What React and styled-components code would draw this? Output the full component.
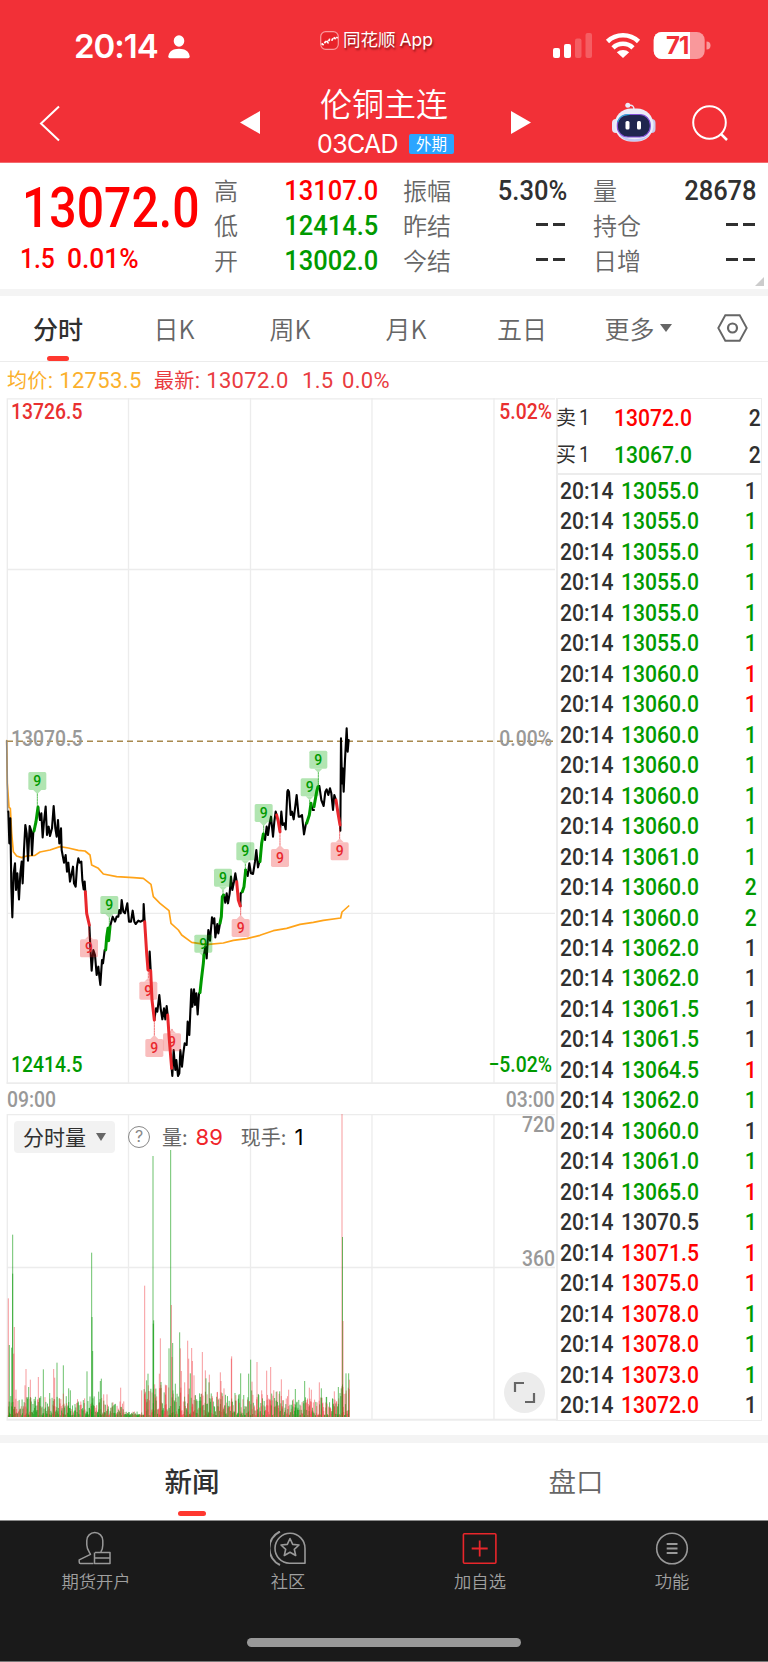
import React from "react";
import styled, { createGlobalStyle, css } from "styled-components";

const RED = "#ff0000";
const GREEN = "#009a00";
const INK = "#303030";
const GREY = "#666";

const GlobalStyle = createGlobalStyle`
  * { box-sizing: border-box; }
  body { margin: 0; background: #fff; font-family: Roboto, "Noto Sans CJK SC", sans-serif; }
  svg { display: block; }
`;

const Page = styled.main`
  width: 768px;
  height: 1662px;
  display: flex;
  flex-direction: column;
  background: #fff;
  overflow: hidden;
`;

/* Narrow numerals: Roboto squeezed horizontally */
const Num = styled.span`
  display: block;
  white-space: nowrap;
  font: ${(p) => p.$weight || 500} ${(p) => p.$size}px/1 Roboto, sans-serif;
  color: ${(p) => p.$color || INK};
  transform: scaleX(${(p) => p.$sx || 0.88});
  transform-origin: ${(p) => (p.$right ? "right" : "left")} center;
`;

/* ---------- header ---------- */
const Header = styled.header`
  height: 163px;
  background: #f23037;
  color: #fff;
  border-bottom: 1px solid #f46a6e;
`;
const StatusBar = styled.div`
  height: 86px;
  display: grid;
  grid-template-columns: 320px 1fr 215px;
`;
const Clock = styled.div`
  display: flex;
  align-items: center;
  gap: 10px;
  padding: 7px 0 0 74px;
  font: 600 33px/1 Inter, sans-serif;
  letter-spacing: -1px;
`;
const Brand = styled.div`
  display: flex;
  align-items: center;
  height: 40px;
  margin-top: 20px;
  gap: 4px;
  font: 400 17.5px/1 Inter, "Noto Sans CJK SC", sans-serif;
  text-shadow: 1px 2px 2px rgba(60, 0, 0, 0.6);
  white-space: nowrap;
`;
const StatusIcons = styled.div`
  display: flex;
  align-items: flex-start;
  padding-top: 31px;
`;
const TitleBar = styled.div`
  height: 76px;
  display: grid;
  grid-template-columns: 240px 20px 251px 20px 81px 43px 37px 36px;
  align-items: start;
`;
const IconSlot = styled.div`
  padding-top: ${(p) => p.$top}px;
  padding-left: ${(p) => p.$left || 0}px;
`;
const TitleBlock = styled.div`
  display: flex;
  flex-direction: column;
  align-items: center;
`;
const Title = styled.h1`
  margin: -1px 3px 0 0;
  font: 350 32px/34px "Noto Sans CJK SC", sans-serif;
`;
const SubTitle = styled.div`
  display: flex;
  align-items: center;
  gap: 11px;
  height: 26px;
  margin-top: 12px;
  font: 400 25px/1 Inter, sans-serif;
`;
const Code = styled.span`
  letter-spacing: -0.7px;
`;
const Badge = styled.span`
  width: 45px;
  height: 20px;
  border-radius: 2px;
  background: #2ba5ff;
  font: 400 15.5px/19px "Noto Sans CJK SC", sans-serif;
  text-align: center;
`;

/* ---------- quote ---------- */
const Quote = styled.section`
  height: 126px;
  display: grid;
  grid-template-columns: 214px 164px 25px 164px 26px 164px;
  position: relative;
`;
const LastPrice = styled.div`
  padding: 18px 0 0 22px;
`;
const Change = styled.div`
  display: grid;
  grid-template-columns: 47px auto;
  margin-top: 9px;
  margin-left: -2px;
`;
const StatColumn = styled.div`
  padding-top: 10px;
  grid-column: ${(p) => p.$col};
`;
const Stat = styled.div`
  height: 35.3px;
  display: flex;
  align-items: center;
  justify-content: space-between;
`;
const StatLabel = styled.span`
  font: 350 24px/1 "Noto Sans CJK SC", sans-serif;
  color: ${GREY};
  margin-top: -2px;
`;
const Corner = styled.i`
  position: absolute;
  right: 4px;
  bottom: 3px;
  border-left: 9px solid transparent;
  border-bottom: 9px solid #ccc;
`;
const Dashes = styled.span`
  display: flex;
  gap: 5px;
  padding: 0 2px 3px 0;
  &::before, &::after { content: ""; width: 12px; height: 2.5px; background: ${INK}; }
`;
const Band = styled.div`
  height: ${(p) => p.$h}px;
  background: #f4f4f4;
`;

/* ---------- period tabs ---------- */
const PeriodTabs = styled.nav`
  height: 66px;
  display: grid;
  grid-template-columns: repeat(6, 116px) 72px;
  border-bottom: 1px solid #ececec;
`;
const Tab = styled.div`
  display: flex;
  align-items: center;
  justify-content: center;
  gap: 5px;
  position: relative;
  font: ${(p) => (p.$active ? 500 : 350)} ${(p) => p.$size || 25}px/1 "Noto Sans CJK SC", sans-serif;
  color: ${(p) => (p.$active ? INK : GREY)};
  padding-bottom: 1px;
  ${(p) =>
    p.$active &&
    css`
      &::after {
        content: "";
        position: absolute;
        bottom: ${p.$barBottom ?? 0}px;
        left: calc(50% - ${p.$bar / 2}px);
        width: ${p.$bar}px;
        height: 5px;
        border-radius: 3px;
        background: #ff382f;
      }
    `}
`;
const Caret = styled.i`
  border: ${(p) => p.$s || 6}px solid transparent;
  border-top: 8px solid #666;
  border-bottom: 0;
`;

/* ---------- chart area ---------- */
const AvgLine = styled.div`
  height: 36px;
  display: flex;
  align-items: center;
  padding: 1px 0 0 7px;
  white-space: pre;
  font: 400 22px/1 Roboto, "Noto Sans CJK SC", sans-serif;
  letter-spacing: 0.35px;
  color: #e93b40;
`;
const Avg = styled.span`
  width: 147px;
  color: #fbb02c;
`;
const Latest = styled.span`
  width: 148px;
`;
const Delta = styled.span`
  width: 40px;
`;
const Zh = styled.span`
  font-size: 20px;
`;
const Market = styled.section`
  height: 1037px;
  display: grid;
  grid-template-columns: 556px 206px;
`;
const Charts = styled.div`
  position: relative;
`;
const TimeAxis = styled.div`
  height: 30px;
  display: flex;
  justify-content: space-between;
  align-items: center;
  padding: 1px 1px 0 7px;
`;
const VolumeBox = styled.div`
  position: relative;
`;
const VolumeHead = styled.div`
  position: absolute;
  left: 14px;
  top: 7px;
  height: 32px;
  display: flex;
  align-items: center;
  font: 400 20px/1 "Noto Sans CJK SC", sans-serif;
  color: ${GREY};
`;
const Pill = styled.div`
  width: 101px;
  height: 32px;
  margin-right: 13px;
  display: flex;
  align-items: center;
  gap: 10px;
  padding: 0 0 1px 9px;
  border-radius: 4px;
  background: #f2f2f2;
  color: ${INK};
  font-size: 21px;
`;
const Help = styled.span`
  width: 22px;
  height: 22px;
  border: 1.6px solid #888;
  border-radius: 50%;
  font: 400 16px/19px Inter, sans-serif;
  text-align: center;
  color: #888;
  margin-right: 12px;
`;
const Value = styled.b`
  font: 400 22px/1 Inter, sans-serif;
  color: ${(p) => p.$color};
  margin: 0 ${(p) => p.$mr || 0}px 0 8px;
`;
const Expand = styled.div`
  position: absolute;
  left: 504px;
  top: 258px;
  width: 41px;
  height: 41px;
  border-radius: 50%;
  background: #ececec;
  display: grid;
  place-items: center;
`;
const Book = styled.aside`
  height: 1023px;
  border: 1px solid #ececec;
  border-left: 2px solid #ececec;
`;
const Offers = styled.div`
  height: 76px;
  border-bottom: 2px solid #ececec;
`;
const Offer = styled.div`
  height: 37.5px;
  display: grid;
  grid-template-columns: 21px 35px 76px 1fr;
  align-items: center;
`;
const Side = styled.span`
  font: 400 20px/1 "Noto Sans CJK SC", sans-serif;
  color: ${INK};
  margin: -2px 0 0 -2px;
`;
const Tick = styled.div`
  height: 30.48px;
  display: grid;
  grid-template-columns: 61px 76px 1fr;
  align-items: center;
  padding: 1.500px 4px 0 2px;
`;
const Qty = styled.div`
  justify-self: end;
`;

/* ---------- bottom ---------- */
const InfoTabs = styled.nav`
  height: 78px;
  display: grid;
  grid-template-columns: 1fr 1fr;
  border-bottom: 1px solid #8b8b8b;
`;
const Dock = styled.footer`
  height: 141px;
  background: #1a1a1a;
  border-bottom: 1px solid #777;
  display: flex;
  flex-direction: column;
`;
const DockItems = styled.div`
  height: 117px;
  display: grid;
  grid-template-columns: repeat(4, 1fr);
`;
const DockItem = styled.div`
  display: flex;
  flex-direction: column;
  align-items: center;
  padding-top: 10px;
  gap: 4px;
  font: 350 17.3px/20px "Noto Sans CJK SC", sans-serif;
  color: #a0a0a0;
`;
const HomeBar = styled.div`
  width: 274px;
  height: 9px;
  border-radius: 5px;
  margin: 0 auto;
  background: #999;
`;

/* Price series, in thirds of a pixel below y = 302 of the chart */
const PRICE = [
  ["#888", "20,122 23,335"],
  ["#000", "25,335 28,430 31,355 34,560 37,652 41,520 45,490 48,570 52,520 57,598 61,520 65,485 68,550 72,450 76,375 80,400 84,482 89,378 93,390 96,465 100,395"],
  ["#000", "114,320 120,360 124,340 128,412 132,365 137,320 141,405 146,380 150,408 156,385 161,318 166,385 170,410 174,360 178,430 183,385 185,450 192,488 197,465 201,515 205,488 210,545 215,520 219,500 222,550 227,560 231,500 235,475 239,488 244,485 247,540 251,568 254,545 256,575"],
  ["#000", "268,675 271,740 275,812 280,750 285,765 290,825 295,800 298,830 301,855 306,780 309,790 314,750"],
  ["#000", "330,680 338,650 345,665 350,650 355,650 358,630 362,640 365,600 370,635 375,640 382,610 387,665 393,665 398,632 403,665 407,672 415,662 422,665 430,660 431,612 434,665"],
  ["#000", "446,810 449,755 452,810"],
  ["#000", "463,960 468,925 472,935 478,885 482,925 487,958 492,925 496,958 500,918 503,945"],
  ["#000", "515,1105 517,1128 521,1050 526,1110 529,1080 534,1128 538,1120 541,1050 546,1100 550,1060 554,1030 560,1035 563,965 568,1005 574,868 577,920 582,868 585,915 589,880 593,943 597,880 600,878"],
  ["#000", "612,765 616,740 620,775 625,690 630,722 636,652 640,670 643,655 646,712 652,672 655,700 660,670"],
  ["#000", "671,585 676,608 680,580 684,610 689,580 693,530 697,570 702,545 706,520 710,545"],
  ["#000", "721,618 722,580 727,575"],
  ["#000", "737,510 743,528 748,490 753,520 759,522 765,485 769,450 774,502 778,485"],
  ["#000", "790,402 795,420 800,380 804,405 808,375 813,350 819,410 823,365 827,335 830,345"],
  ["#000", "840,395 844,335 848,375 853,370 857,388 862,275 864,270 867,275 872,345 876,335 881,358 890,285 896,350 900,350 906,345 912,403 918,370"],
  ["#000", "933,310 938,330 942,330"],
  ["#000", "958,258 964,300 971,318 976,275 980,268 985,285 990,265 994,280 999,330 1003,285 1008,300"],
  ["#000", "1020,375 1021,392 1023,115 1026,250 1028,205 1031,275 1035,180 1040,85 1043,155 1046,120"],
  [GREEN, "102,393 108,365 114,322"],
  [GREEN, "317,750 320,712 324,685 326,722 330,680"],
  [GREEN, "600,878 604,840 610,790 612,765"],
  [GREEN, "660,670 664,650 667,590 671,585"],
  [GREEN, "727,575 732,560 737,510"],
  [GREEN, "780,485 785,430 790,402"],
  [GREEN, "920,370 928,345 933,310"],
  [GREEN, "942,320 950,275 954,260"],
  ["#e9282d", "256,575 260,640 268,675"],
  ["#e9282d", "434,665 440,760 444,810 452,812 456,900 463,960"],
  ["#e9282d", "503,945 508,1020 515,1105"],
  ["#e9282d", "710,545 715,600 721,618"],
  ["#e9282d", "830,345 835,365 840,395"],
  ["#e9282d", "1008,300 1014,340 1020,375"],
];
const AVERAGE =
  "20,122 22,250 27,322 31,325 35,400 40,455 50,468 65,473 80,468 105,466 120,456 150,450 180,440 205,444 235,451 255,453 270,465 275,495 295,505 310,522 350,530 400,533 430,535 453,553 460,590 480,610 507,632 513,670 535,690 545,705 575,727 600,731 625,733 670,729 700,721 740,716 780,706 820,692 860,685 900,673 940,667 970,661 1022,654 1026,636 1046,618";

/* [center x, box top, tip y of the stem, is a buy signal] */
const SIGNALS = [
  [112, 216, 320, true], [328, 588, 680, true], [610, 704, 768, true], [669, 506, 585, true],
  [736, 427, 510, true], [791, 312, 402, true], [929, 235, 310, true], [955, 152, 260, true],
  [267, 718, 675, false], [445, 845, 812, false], [463, 1017, 960, false], [516, 1000, 990, false],
  [722, 657, 618, false], [840, 447, 395, false], [1019, 427, 380, false],
];

function Signal({ x, top, tip, buy }) {
  const color = buy ? GREEN : "#e9282d";
  const fill = buy ? "#0a0" : "#ee2828";
  const edge = buy ? top + 54 : top;
  const peak = buy ? edge + 12 : edge - 12;
  return (
    <g>
      <line x1={x} x2={x} y1={peak} y2={tip} stroke={color} strokeWidth="2.5" strokeDasharray="5 3" opacity=".8" />
      <g fill={fill} opacity=".3">
        <rect x={x - 27} y={top} width="54" height="54" rx="5" />
        <path d={`M${x - 12} ${edge}H${x + 12}L${x} ${peak}Z`} />
      </g>
      <text x={x} y={top + 42} textAnchor="middle" fontFamily="Roboto" fontWeight="500" fontSize="42" stroke="none" fill={color}>9</text>
    </g>
  );
}

function Label({ x, y, color, end, sx = 0.88, children }) {
  return (
    <text transform={`translate(${x} ${y}) scale(${sx} 1)`} textAnchor={end ? "end" : "start"} fontFamily="Roboto" fontWeight="500" fontSize="22" fill={color}>
      {children}
    </text>
  );
}

const GRID_X = [128.5, 250.5, 372, 494];

function PriceChart() {
  return (
    <svg width="556" height="686" viewBox="0 0 556 686">
      <g stroke="#ececec" strokeWidth="1.3">
        {GRID_X.map((x) => <line key={x} x1={x} x2={x} y1="0" y2="685" />)}
        <line x1="7" x2="555" y1="171.5" y2="171.5" />
        <line x1="7" x2="555" y1="515.3" y2="515.3" />
        <path d="M7.3 685V.8H555" fill="none" />
        <path d="M6.5 685.3H556" strokeWidth="2" />
      </g>
      <line x1="7" x2="555" y1="343.3" y2="343.3" stroke="#a8894f" strokeWidth="1.5" strokeDasharray="6 4" />
      <Label x={11} y={21} color="#e93030">13726.5</Label>
      <Label x={552} y={21} color="#e93030" end>5.02%</Label>
      <Label x={11} y={348} color="#999">13070.5</Label>
      <Label x={552} y={348} color="#999" end>0.00%</Label>
      <Label x={11} y={674} color={GREEN}>12414.5</Label>
      <Label x={552} y={674} color={GREEN} end>−5.02%</Label>
      <g transform="translate(0 302) scale(.33333)" fill="none" strokeLinejoin="round" strokeLinecap="round">
        <polyline points={AVERAGE} stroke="#ffa318" strokeWidth="5" />
        {PRICE.map(([color, points]) => (
          <polyline key={points} points={points} stroke={color} strokeWidth={color === "#000" ? 6.3 : color === "#888" ? 4.5 : 9} />
        ))}
        {SIGNALS.map(([x, top, tip, buy]) => <Signal key={x} x={x} top={top} tip={tip} buy={buy} />)}
      </g>
    </svg>
  );
}

/* Tallest bars of the session: [x, height, colour], thirds of a pixel */
const SPIKES = [
  [25, 356, "r"], [28, 216, "g"], [38, 547, "g"], [38, 430, "g"], [35, 208, "g"], [43, 270, "r"], [41, 190, "r"], [48, 82, "r"],
  [78, 144, "r"], [75, 95, "r"], [91, 112, "r"], [86, 90, "g"], [115, 120, "r"], [130, 143, "g"], [149, 72, "g"], [161, 144, "r"], [164, 118, "r"],
  [171, 163, "g"], [190, 155, "g"], [190, 70, "r"], [206, 86, "g"], [211, 80, "g"], [261, 137, "g"], [275, 493, "g"], [276, 300, "g"], [278, 198, "g"],
  [296, 76, "g"], [301, 108, "g"], [304, 115, "g"], [311, 68, "r"], [321, 68, "r"], [362, 88, "r"], [425, 80, "r"], [434, 394, "r"], [440, 110, "g"], [444, 130, "g"],
  [459, 783, "g"], [461, 290, "g"], [460, 280, "g"], [464, 98, "r"], [478, 130, "r"], [481, 236, "r"], [483, 105, "g"], [496, 97, "r"], [507, 206, "g"], [512, 801, "g"],
  [514, 336, "r"], [516, 180, "r"], [518, 222, "g"], [526, 100, "g"], [539, 254, "g"], [541, 206, "r"], [544, 138, "r"], [554, 104, "r"], [563, 229, "r"],
  [566, 175, "r"], [571, 131, "g"], [575, 207, "r"], [577, 168, "r"], [582, 125, "r"], [607, 195, "r"], [616, 140, "r"], [618, 116, "g"], [628, 127, "r"], [627, 104, "g"],
  [661, 134, "r"], [663, 108, "r"], [672, 86, "r"], [695, 182, "r"], [694, 175, "r"], [722, 131, "g"], [746, 130, "g"], [752, 172, "g"], [756, 106, "r"], [771, 165, "r"],
  [785, 80, "r"], [800, 139, "r"], [812, 150, "r"], [839, 77, "g"], [844, 113, "r"], [866, 82, "r"], [886, 84, "g"], [914, 108, "g"], [928, 88, "r"], [934, 82, "r"],
  [958, 104, "r"], [964, 86, "g"], [1003, 77, "r"], [1015, 90, "g"], [1026, 910, "r"], [1027.5, 540, "g"], [1029, 288, "r"], [1038, 131, "g"], [1046, 131, "g"], [1048, 112, "r"],
];

function noiseBars() {
  let seed = 71;
  const rand = () => {
    seed = (seed * 16807) % 2147483647;
    return seed / 2147483647;
  };
  const bars = [];
  for (let x = 25; x <= 1048; x += 1.25) {
    let level = 58;
    if (x > 372 && x < 432) level = 12;
    else if (x >= 432 && x < 630) level = 92;
    else if (x >= 630 && x < 840) level = 76;
    else if (x > 1015) level = 100;
    else if (x > 320 && x <= 372) level = 42;
    bars.push([x, 5 + level * Math.pow(rand(), 1.8), rand() > (x > 432 ? 0.45 : 0.58) ? "r" : "g"]);
  }
  return bars;
}
const BARS = [...noiseBars(), ...SPIKES];

function VolumeChart() {
  return (
    <svg width="556" height="307" viewBox="0 0 556 307">
      <g stroke="#ececec" strokeWidth="1.3">
        {GRID_X.map((x) => <line key={x} x1={x} x2={x} y1="0" y2="305" />)}
        <line x1="7" x2="555" y1="153.5" y2="153.5" />
        <path d="M7.3 305V.6H555" fill="none" />
        <path d="M6.5 305.8H556" strokeWidth="2" />
      </g>
      <Label x={555} y={18} color="#999" end>720</Label>
      <Label x={555} y={152} color="#999" end>360</Label>
      <g transform="translate(0 -34) scale(.33333)">
        {BARS.map(([x, h, c], i) => (
          <rect key={i} x={x - 1.5} y={1011 - h} width="3" height={h} fill={c === "r" ? "#ee2a30" : "#0a9a0a"} opacity={c === "r" ? 0.47 : 0.6} />
        ))}
      </g>
    </svg>
  );
}

const STATS = [
  [["高", "13107.0", RED], ["低", "12414.5", GREEN], ["开", "13002.0", GREEN]],
  [["振幅", "5.30%", INK], ["昨结"], ["今结"]],
  [["量", "28678", INK], ["持仓"], ["日增"]],
];

/* Price | lots | colour of the lots (k: ink, g: green, r: red) */
const TICKS = `13055.0 1 k;13055.0 1 g;13055.0 1 g;13055.0 1 g;13055.0 1 g;13055.0 1 g;13060.0 1 r;13060.0 1 r;13060.0 1 g;13060.0 1 g;13060.0 1 g;13060.0 1 g;13061.0 1 g;13060.0 2 g;13060.0 2 g;13062.0 1 k;13062.0 1 k;13061.5 1 k;13061.5 1 k;13064.5 1 r;13062.0 1 g;13060.0 1 k;13061.0 1 g;13065.0 1 r;13070.5 1 g;13071.5 1 r;13075.0 1 r;13078.0 1 g;13078.0 1 g;13073.0 1 g;13072.0 1 k`
  .split(";")
  .map((row) => row.split(" "));
const LOT_COLORS = { k: INK, g: GREEN, r: RED };
const PREVIOUS = 13070.5;
const priceColor = (p) => (+p > PREVIOUS ? RED : +p < PREVIOUS ? GREEN : INK);

function StatusGlyphs() {
  return (
    <svg width="165" height="30" viewBox="553 31 165 30" fill="#fff">
      <rect x="553" y="48" width="7" height="10" rx="2" />
      <rect x="564" y="44" width="7" height="14" rx="2" />
      <rect x="575" y="38.5" width="6.5" height="19.5" rx="2" opacity=".22" />
      <rect x="585.5" y="33" width="6.5" height="25" rx="2" opacity=".22" />
      <g fill="none" stroke="#fff" strokeWidth="4.6">
        <path d="M607.5 41.5a22.5 22.5 0 0 1 31 0" />
        <path d="M613 47.8a14.5 14.5 0 0 1 20 0" />
      </g>
      <path d="M616.8 52.2a9.5 9.5 0 0 1 12.4 0L623 58Z" />
      <rect x="653.7" y="32" width="51" height="27" rx="8" opacity=".5" />
      <path d="M690 32V59H661.7a8 8 0 0 1-8-8V40a8 8 0 0 1 8-8Z" />
      <path d="M706.5 41.5a4 4 0 0 1 0 8Z" opacity=".5" />
      <text x="666" y="54.3" fontFamily="Inter" fontSize="24" fontWeight="700" letterSpacing="-1" fill="#f23037">71</text>
    </svg>
  );
}

function BrandLogo() {
  return (
    <svg width="19" height="19" viewBox="0 0 19 19" fill="none">
      <rect x=".7" y=".7" width="17.6" height="17.6" rx="5" fill="#e8232a" stroke="#fa9a9d" strokeWidth="1.2" />
      <path d="M1.5 12.5 3 13.5 5 11.5 6.5 9.5 8 11.5 9.5 8.5 12 9 13.5 6.5 16 8 17.5 6" stroke="#fff" strokeWidth="1.8" strokeDasharray="2.6 1.1" />
    </svg>
  );
}

function Robot() {
  return (
    <svg width="44" height="41" viewBox="0 0 44 41">
      <path d="M17 3.5q5-1 5 4" fill="none" stroke="#e6e6f5" strokeWidth="1.5" />
      <circle cx="15.8" cy="3.2" r="2.5" fill="#ecebfa" />
      <rect x="0" y="17" width="8" height="14" rx="4" fill="#e4e6f8" />
      <rect x="35.5" y="17" width="8" height="14" rx="4" fill="#c9c9ec" />
      <rect x="2.5" y="6.5" width="39" height="33" rx="16.5" fill="#ececf8" />
      <path d="M6 30c5 9 27 10 33 0-3 6.500-9 9.500-17 9.500S9 36.500 6 30Z" fill="#c3caf3" />
      <rect x="5.300" y="12.500" width="33" height="22.500" rx="10.500" fill="#20264f" stroke="#8551d8" strokeWidth="1.1" />
      <path d="M5.500 20q2-7.500 12-7.500" fill="none" stroke="#27b7d4" strokeWidth="1.200" />
      <rect x="13.500" y="19" width="4" height="8.500" rx="1.500" fill="#fff" />
      <rect x="25" y="19" width="4" height="8.500" rx="1.500" fill="#fff" />
    </svg>
  );
}

const DOCK = [
  ["期货开户", (
    <g key="a" fill="none" stroke="#999" strokeWidth="1.5" strokeLinejoin="round">
      <path d="M15.5 32.5H2.5Q1.2 32.500 1.2 31V28.800L12.500 23.300C10.500 20 8.800 18 8.800 14V9.500a8 8 0 0 1 16 0V14q0 4-2 7" />
      <path d="M17 21.500H32V32.500H16.500V21.500M16.500 27H32M22 21.500" />
    </g>
  )],
  ["社区", (
    <g key="b" fill="none" stroke="#999" strokeWidth="1.6" strokeLinejoin="round">
      <path d="M35 32.300H19.500A15 15 0 1 1 35 17.500Z" />
      <path d="M10 .5A18.500 18.500 0 0 0 10 34" strokeWidth="2" />
      <path d="M20 7.500 22.700 13.400 29 14 24.300 18.300 25.700 24.500 20 21.300 14.300 24.500 15.700 18.300 11 14 17.300 13.400Z" />
    </g>
  )],
  ["加自选", (
    <g key="c" fill="none" stroke="#e8262b" strokeWidth="1.6">
      <rect x="1.4" y="2.8" width="32.5" height="29.5" rx="1" />
      <path d="M17.700 9.500V25.500M9.700 17.500H25.700" strokeWidth="1.8" />
    </g>
  )],
  ["功能", (
    <g key="d" fill="none" stroke="#999" strokeWidth="1.6">
      <circle cx="18" cy="17.500" r="15.300" />
      <path d="M12.700 13H23.500M12.700 17.500H23.500M12.700 22H23.500" strokeWidth="2" />
    </g>
  )],
];

export default function App() {
  return (
    <Page>
      <GlobalStyle />
      <Header>
        <StatusBar>
          <Clock>
            20:14
            <svg width="22" height="24" viewBox="0 0 22 24" fill="#fff">
              <ellipse cx="11" cy="6" rx="5.3" ry="5.8" />
              <path d="M.3 21.500C.8 16.500 5 13.800 11 13.800s10.200 2.700 10.700 7.700q0 1.800-1.700 1.800H2Q.3 23.300.3 21.500Z" />
            </svg>
          </Clock>
          <Brand><BrandLogo />同花顺<span>App</span></Brand>
          <StatusIcons><StatusGlyphs /></StatusIcons>
        </StatusBar>
        <TitleBar>
          <IconSlot $top={19} $left={39}>
            <svg width="22" height="38" viewBox="0 0 22 38" fill="none" stroke="#fff" strokeWidth="2"><path d="M20 1.500 2 18.500 20 35.500" /></svg>
          </IconSlot>
          <IconSlot $top={25}><svg width="20" height="23" fill="#fff"><path d="M20 0V23L0 11.500Z" /></svg></IconSlot>
          <TitleBlock>
            <Title>伦铜主连</Title>
            <SubTitle><Code>03CAD</Code><Badge>外期</Badge></SubTitle>
          </TitleBlock>
          <IconSlot $top={25}><svg width="20" height="23" fill="#fff"><path d="M0 0V23L20 11.500Z" /></svg></IconSlot>
          <span />
          <IconSlot $top={16}><Robot /></IconSlot>
          <span />
          <IconSlot $top={19}>
            <svg width="37" height="37" viewBox="0 0 37 37" fill="none" stroke="#fff" strokeWidth="2"><circle cx="17.5" cy="17.5" r="16.3" /><path d="M29 29 35 35" strokeWidth="2.5" /></svg>
          </IconSlot>
        </TitleBar>
      </Header>

      <Quote>
        <LastPrice>
          <Num $size={55} $color={RED} $sx={0.875}>13072.0</Num>
          <Change>
            <Num $size={28} $color={RED}>1.5</Num>
            <Num $size={28} $color={RED} $sx={0.94}>0.01%</Num>
          </Change>
        </LastPrice>
        {STATS.map((rows, i) => (
          <StatColumn key={i} $col={i * 2 + 2}>
            {rows.map(([label, value, color]) => (
              <Stat key={label}>
                <StatLabel>{label}</StatLabel>
                {value ? <Num $size={28} $color={color} $sx={0.91} $right>{value}</Num> : <Dashes />}
              </Stat>
            ))}
          </StatColumn>
        ))}
        <Corner />
      </Quote>
      <Band $h={7} />

      <PeriodTabs>
        <Tab $active $bar={22}>分时</Tab>
        <Tab>日K</Tab>
        <Tab>周K</Tab>
        <Tab>月K</Tab>
        <Tab>五日</Tab>
        <Tab>更多<Caret /></Tab>
        <Tab>
          <svg width="31" height="28" viewBox="0 0 31 28" fill="none" stroke="#666" strokeWidth="1.9">
            <path d="M8.300 1.200H22.700L29.700 14 22.700 26.800H8.300L1.300 14Z" /><circle cx="15.5" cy="14" r="4.5" strokeWidth="2.2" />
          </svg>
        </Tab>
      </PeriodTabs>

      <AvgLine>
        <Avg><Zh>均价</Zh>: 12753.5</Avg>
        <Latest><Zh>最新</Zh>: 13072.0</Latest>
        <Delta>1.5</Delta>
        <span>0.0%</span>
      </AvgLine>

      <Market>
        <Charts>
          <PriceChart />
          <TimeAxis>
            <Num $size={22} $color="#999">09:00</Num>
            <Num $size={22} $color="#999" $right>03:00</Num>
          </TimeAxis>
          <VolumeBox>
            <VolumeChart />
            <VolumeHead>
              <Pill>分时量<Caret $s={5.5} /></Pill>
              <Help>?</Help>
              量:<Value $color="#f0252b" $mr={18}>89</Value>
              现手:<Value $color="#000">1</Value>
            </VolumeHead>
            <Expand>
              <svg width="23" height="23" fill="none" stroke="#666" strokeWidth="2.2"><path d="M2 11V2H11M21 12V21H12" /></svg>
            </Expand>
          </VolumeBox>
        </Charts>
        <Book>
          <Offers>
            <Offer><Side>卖</Side><Num $size={22} $weight={400}>1</Num><Num $size={24} $color={RED}>13072.0</Num><Qty><Num $size={24} $right>2</Num></Qty></Offer>
            <Offer><Side>买</Side><Num $size={22} $weight={400}>1</Num><Num $size={24} $color={GREEN}>13067.0</Num><Qty><Num $size={24} $right>2</Num></Qty></Offer>
          </Offers>
          {TICKS.map(([price, lots, c], i) => (
            <Tick key={i}>
              <Num $size={24}>20:14</Num>
              <Num $size={24} $color={priceColor(price)}>{price}</Num>
              <Qty><Num $size={24} $color={LOT_COLORS[c]} $right>{lots}</Num></Qty>
            </Tick>
          ))}
        </Book>
      </Market>

      <Band $h={8} />
      <InfoTabs>
        <Tab $active $size={27.5} $bar={28} $barBottom={4}>新闻</Tab>
        <Tab $size={27.5}>盘口</Tab>
      </InfoTabs>
      <Dock>
        <DockItems>
          {DOCK.map(([label, icon]) => (
            <DockItem key={label}>
              <svg width="36" height="36" viewBox="0 0 36 36">{icon}</svg>
              {label}
            </DockItem>
          ))}
        </DockItems>
        <HomeBar />
      </Dock>
    </Page>
  );
}
